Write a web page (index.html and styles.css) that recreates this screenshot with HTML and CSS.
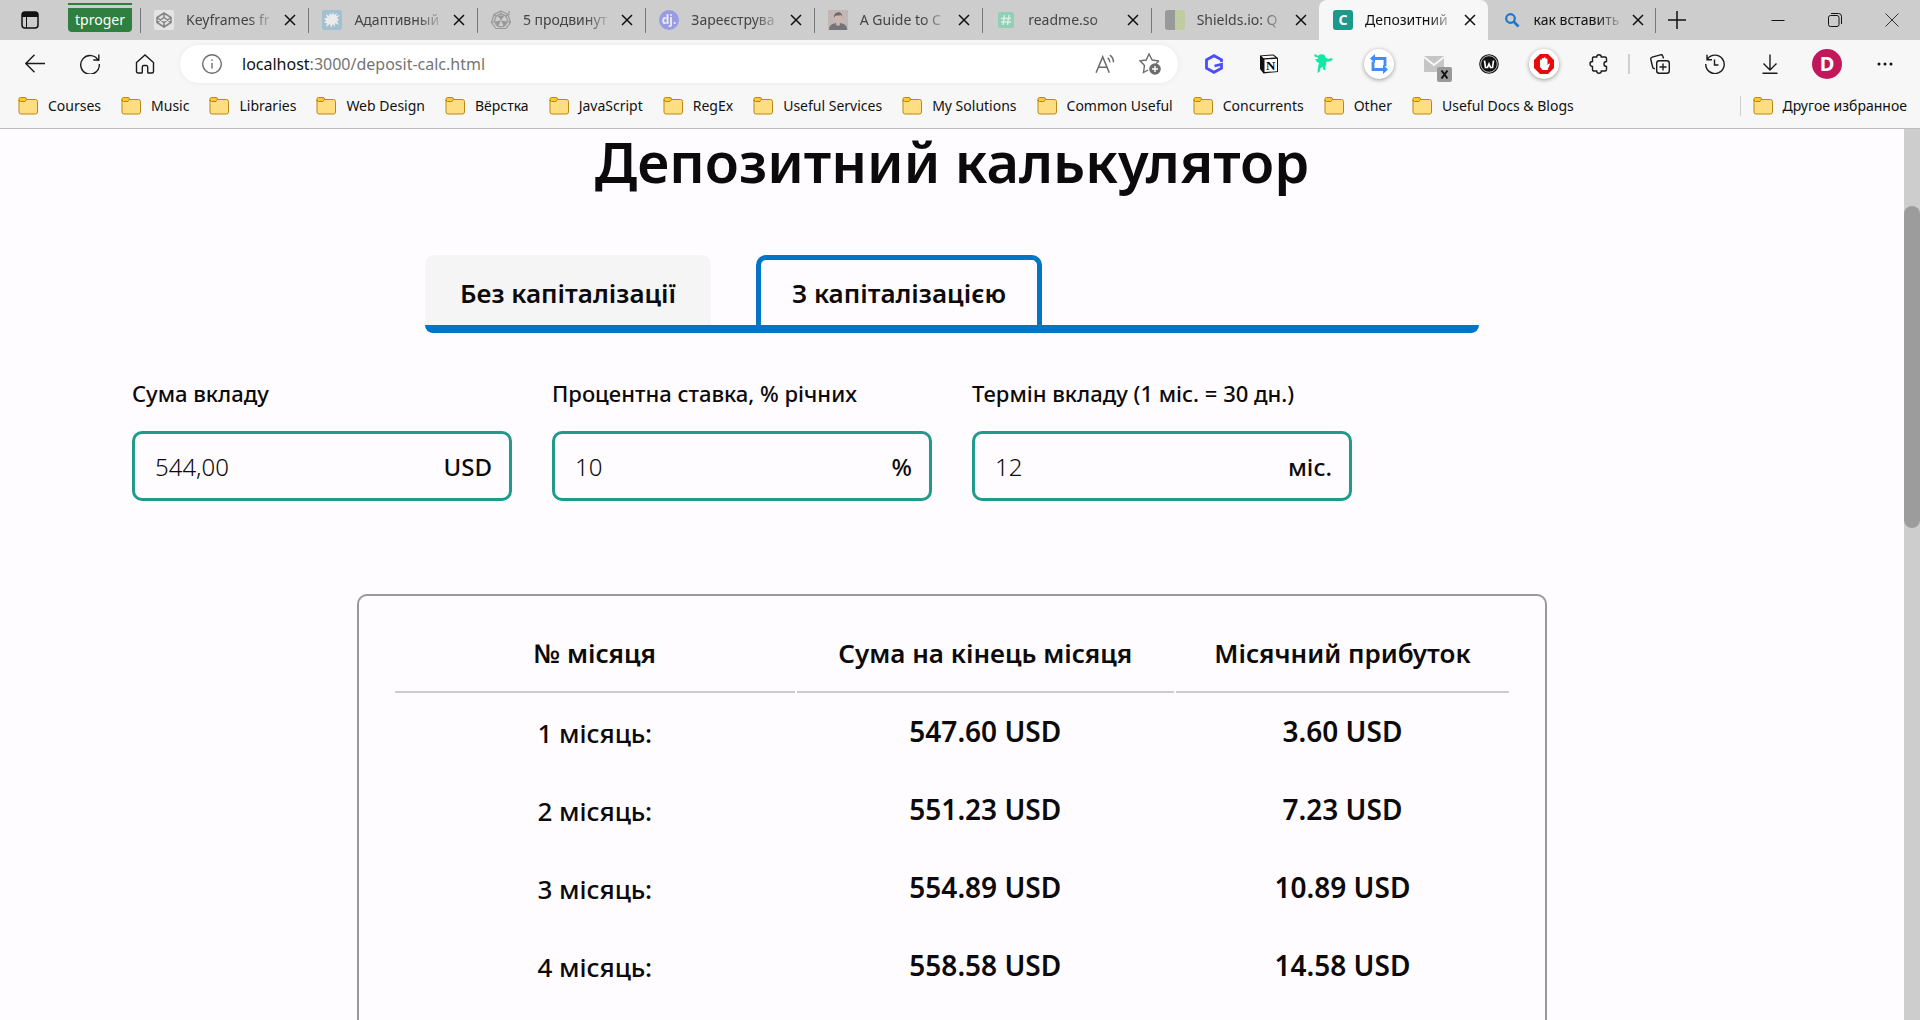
FILE: index.html
```html
<!DOCTYPE html>
<html lang="uk">
<head>
<meta charset="utf-8">
<meta name="viewport" content="width=device-width, initial-scale=1">
<title>Депозитний калькулятор</title>
<link rel="stylesheet" href="styles.css">
</head>
<body>
<svg class="defs" width="0" height="0" aria-hidden="true">
  <symbol id="x" viewBox="0 0 12 12"><path d="M1 1l10 10M11 1L1 11" fill="none" stroke="currentColor" stroke-width="1.5"/></symbol>
  <symbol id="folder" viewBox="0 0 20 20"><path d="M1 4.500V16a2 2 0 0 0 2 2h14.500a2 2 0 0 0 2-2V5.500a2 2 0 0 0-2-2H8" fill="#ffde82" stroke="#b98a10"/><path d="M1 5V3a1.500 1.500 0 0 1 1.500-1.500h4.500a1.500 1.500 0 0 1 1.500 1.500v.5L7 5.500H2.500A1.500 1.500 0 0 1 1 4z" fill="#ffc92e" stroke="#b98a10"/></symbol>
</svg>

<header class="browser">
  <div class="tabstrip">
    <button class="strip-menu" type="button" aria-label="Вкладки"><svg width="18" height="18" viewBox="0 0 18 18"><rect x="1" y="1" width="16" height="16" rx="3" fill="none" stroke="#111" stroke-width="1.500"/><path d="M1 6V4a3 3 0 0 1 3-3h10a3 3 0 0 1 3 3v2z" fill="#111"/><path d="M5.500 6v11" stroke="#111"/></svg></button>
    <div class="group"><button class="group-chip" type="button">tproger</button></div>
    <div class="tabs">
      <div class="tab dim"><svg class="fav" viewBox="0 0 20 20"><rect width="20" height="20" rx="2" fill="#f4f4f4"/><path d="M10 3l7 4.500v5L10 17l-7-4.500v-5zM10 3v4.500M10 12.500V17M3 7.500l7 5 7-5M3 12.500l7-5 7 5" fill="none" stroke="#555" stroke-width="1.500"/></svg><span class="tab-title">Keyframes fr</span><button class="close" type="button" aria-label="Закрити"><svg><use href="#x"/></svg></button></div>
      <div class="tab dim"><svg class="fav" viewBox="0 0 20 20"><rect width="20" height="20" rx="2" fill="#86bad2"/><path d="M10 5l1-3 1 3 3-2-1 3 4-1-3 3 2 2-2 1 2 4-4-2 0 4-2-3-2 4-1-4-4 3 1-4-3 0 2-2-2-3 3 0-1-4 3 2 1-3z" fill="#fff"/></svg><span class="tab-title">Адаптивный</span><button class="close" type="button" aria-label="Закрити"><svg><use href="#x"/></svg></button></div>
      <div class="tab dim"><svg class="fav" viewBox="0 0 20 20"><g fill="none" stroke="#777" stroke-width="1.200"><path d="M10 1l7 3.500 2.500 8L15 18.500H5L.5 12.500 3 4.500z"/><circle cx="10" cy="10.500" r="6.300"/><path d="M10 1v3M3 4.500l2.500 2M17 4.500l-2.500 2M.5 12.500l3-1M19.500 12.500l-3-1M18 1v4"/></g><path d="M10 10.500L6.500 5.500h7zM10 10.500l6 1-3 5zM10 10.500l-6 1 3 5z" fill="#777"/></svg><span class="tab-title">5 продвинут</span><button class="close" type="button" aria-label="Закрити"><svg><use href="#x"/></svg></button></div>
      <div class="tab dim"><svg class="fav" viewBox="0 0 20 20"><circle cx="10" cy="10" r="10" fill="#747cf5"/><text x="10" y="14" text-anchor="middle" class="fav-text">dj.</text></svg><span class="tab-title">Зареєструва</span><button class="close" type="button" aria-label="Закрити"><svg><use href="#x"/></svg></button></div>
      <div class="tab dim"><svg class="fav" viewBox="0 0 20 20"><rect width="20" height="20" fill="#b9aaa8"/><path d="M1 20c0-5 3-7 9-7s9 2 9 7z" fill="#3b3b42"/><path d="M8 11h4v4l-2 1-2-1z" fill="#c79d90"/><ellipse cx="10" cy="8" rx="3.500" ry="5" fill="#d3a99b"/><path d="M6 8c-1-7 9-8 8-1l-1-2c-2 1-4 0-6 1z" fill="#2c2728"/></svg><span class="tab-title">A Guide to C</span><button class="close" type="button" aria-label="Закрити"><svg><use href="#x"/></svg></button></div>
      <div class="tab dim"><svg class="fav" viewBox="0 0 20 20"><rect x="2" y="2" width="16" height="16" rx="2" fill="#66d3a8"/><path d="M8.500 5l-1.500 10M13 5l-1.500 10M5 8.500h10M5 12h10" stroke="#e8fff4" stroke-width="1.500"/></svg><span class="tab-title">readme.so</span><button class="close" type="button" aria-label="Закрити"><svg><use href="#x"/></svg></button></div>
      <div class="tab dim"><svg class="fav" viewBox="0 0 20 20"><path d="M3 0h7v20H3a3 3 0 0 1-3-3V3a3 3 0 0 1 3-3z" fill="#777"/><path d="M10 0h7a3 3 0 0 1 3 3v14a3 3 0 0 1-3 3h-7z" fill="#b6cc83"/></svg><span class="tab-title">Shields.io: Q</span><button class="close" type="button" aria-label="Закрити"><svg><use href="#x"/></svg></button></div>
      <div class="tab active"><svg class="fav" viewBox="0 0 20 20"><rect width="20" height="20" rx="3" fill="#1d998b"/><text x="10" y="15" text-anchor="middle" class="fav-text big">C</text></svg><span class="tab-title">Депозитний</span><button class="close" type="button" aria-label="Закрити"><svg><use href="#x"/></svg></button></div>
      <div class="tab last"><svg class="fav" viewBox="0 0 20 20"><circle cx="8.500" cy="8.500" r="4.300" fill="none" stroke="#1878d2" stroke-width="2.200"/><path d="M11.500 11.500l5 5" stroke="#1878d2" stroke-width="2.600"/></svg><span class="tab-title">как вставить</span><button class="close" type="button" aria-label="Закрити"><svg><use href="#x"/></svg></button></div>
    </div>
    <button class="new-tab" type="button" aria-label="Нова вкладка"><svg width="18" height="18" viewBox="0 0 18 18"><path d="M9 0v18M0 9h18" stroke="#111" stroke-width="1.500"/></svg></button>
    <div class="window-controls">
      <button type="button" aria-label="Згорнути"><svg width="14" height="14" viewBox="0 0 14 14"><path d="M.5 7.500h13" stroke="#111"/></svg></button>
      <button type="button" aria-label="Розгорнути"><svg width="14" height="14" viewBox="0 0 14 14" fill="none" stroke="#111"><rect x=".5" y="2.500" width="10.500" height="11" rx="2"/><path d="M3 .5h7.500a3 3 0 0 1 3 3V11"/></svg></button>
      <button type="button" aria-label="Закрити вікно"><svg width="14" height="14" viewBox="0 0 14 14"><path d="M.5.5l13 13M13.500.5l-13 13" stroke="#333"/></svg></button>
    </div>
  </div>

  <div class="toolbar">
    <button class="tool" type="button" aria-label="Назад"><svg class="ico" viewBox="0 0 20 20"><path d="M20 9.500H.8M9.500.8L.8 9.500l8.700 8.700"/></svg></button>
    <button class="tool" type="button" aria-label="Оновити"><svg class="ico" viewBox="0 0 20 20"><path d="M18.500 7A9.300 9.300 0 1 0 19.300 10M18.800.5v5.500h-5.500"/></svg></button>
    <button class="tool" type="button" aria-label="Додому"><svg class="ico" viewBox="0 0 20 20"><path d="M1.500 8.500L10 1l8.500 7.500v9a1.500 1.500 0 0 1-1.500 1.500h-3.500a.8.8 0 0 1-.8-.8V13a1.500 1.500 0 0 0-1.500-1.500H8.800A1.500 1.500 0 0 0 7.300 13v5.200a.8.8 0 0 1-.8.8H3a1.500 1.500 0 0 1-1.500-1.500z"/></svg></button>
    <div class="address">
      <svg class="ico soft" viewBox="0 0 20 20"><circle cx="10" cy="10" r="9.300"/><path d="M10 9v5.500M10 5.200v1.600"/></svg>
      <span class="url"><span class="host">localhost</span>:3000/deposit-calc.html</span>
      <button type="button" aria-label="Читати вголос"><svg class="ico soft" viewBox="0 0 20 20"><path d="M1 18L7 3.500 13 18M3 13h8M11.500 4.500c1.500 1 2 2.300 2 4M13.500 2c2.300 1.500 3.300 3.500 3.300 6.500"/></svg></button>
      <button type="button" aria-label="Додати до обраного"><svg class="ico soft" viewBox="0 0 22 22"><path d="M20 8l-6.800-1L10 1 7.200 7 1 7.800 5.500 12.500 4.500 19.500 9 17M20 8l-3 2.500"/><circle cx="16" cy="16" r="5.800" fill="#6d6d6d" stroke="none"/><path d="M16 13v6M13 16h6" stroke="#fff"/></svg></button>
    </div>
    <div class="tools">
      <button class="tool" type="button" aria-label="Розширення G"><svg width="20" height="20" viewBox="0 0 20 20"><path d="M17.500 8V5.800L10 1.700 2.500 5.800v8.400l7.500 4.100 7.500-4.100v-4L10.500 12" fill="none" stroke="#4a4cff" stroke-width="2.800"/></svg></button>
      <button class="tool" type="button" aria-label="Notion"><svg width="20" height="20" viewBox="0 0 20 20"><path d="M1 1.500L14.500.5 19 4v14l-14.500 1.500L1 15z" fill="#111"/><path d="M5.500 5.500l12.500-.8v12.600l-12.500.8z" fill="#fff"/><path d="M2.500 2.300l11.500-.8 2.500 2-11.800.8z" fill="#fff"/><text x="11.800" y="16" text-anchor="middle" class="notion">N</text></svg></button>
      <button class="tool" type="button" aria-label="Розширення"><svg width="20" height="20" viewBox="0 0 20 20"><path d="M1 0l3 2c1-2 5-2 6.500-1L12 4l3 1 2-1 2 1-2 2-5 1 .5 2-1.500 3 .5 3h-2l-1-3-2 1-1 4-2 1 .500-6 1-4L3 8 1 5h3V4L0 2z" fill="#14e8a6"/></svg></button>
      <button class="tool" type="button" aria-label="Обмін"><span class="disc"><svg width="20" height="20" viewBox="0 0 20 20"><path d="M5 4.500h11v8M4 7.500v8h11" fill="none" stroke="#428bff" stroke-width="2.800"/><path d="M6 0v9L1 4.500zM14 11v9l5-4.500z" fill="#428bff"/></svg></span></button>
      <button class="tool" type="button" aria-label="Пошта"><svg class="mail" width="30" height="30" viewBox="0 0 30 30"><rect x="2" y="4" width="20" height="16" fill="#c6c6c6"/><path d="M2 5l10 8 10-8" fill="none" stroke="#f7f7f7" stroke-width="2"/><rect x="15" y="15" width="15" height="15" rx="2" fill="#999"/><path d="M19.500 18.500l6 8M25.500 18.500l-6 8" stroke="#111" stroke-width="2"/></svg></button>
      <button class="tool" type="button" aria-label="Розширення W"><svg width="20" height="20" viewBox="0 0 20 20"><circle cx="10" cy="10" r="9.800" fill="#111"/><circle cx="10" cy="10" r="8.300" fill="none" stroke="#eee" stroke-width=".8"/><path d="M5.500 6.500l1 7h2L10 10l1.500 3.500h2l1-7" fill="none" stroke="#fff" stroke-width="1.700"/></svg></button>
      <button class="tool" type="button" aria-label="Блокувальник"><span class="disc"><svg width="20" height="20" viewBox="0 0 20 20"><path d="M6 0h8l6 6v8l-6 6H6l-6-6V6z" fill="#e60c0c"/><path d="M6 11V6.500a.9.900 0 0 1 1.800 0V5a.9.900 0 0 1 1.900 0V4.200a.9.900 0 0 1 1.900 0V5.500a.9.900 0 0 1 1.900 0V11l1.300-1.300c.8-.5 1.400.1 1 .9L13.500 16h-5L6 13z" fill="#fff"/></svg></span></button>
      <button class="tool" type="button" aria-label="Розширення"><svg class="ico" viewBox="0 0 20 20"><path d="M4.500 3h3.200a2.300 2.300 0 0 1 4.600 0H16A1.500 1.500 0 0 1 17.500 4.500v3a2.400 2.400 0 1 0 0 5v3A1.500 1.500 0 0 1 16 17h-3.700a2.300 2.300 0 0 1-4.600 0H4.500A1.500 1.500 0 0 1 3.500 15.500v-3a2.400 2.400 0 0 1 0-5v-3A1.500 1.500 0 0 1 4.500 3z"/></svg></button>
      <span class="rule"></span>
      <button class="tool" type="button" aria-label="Колекції"><svg class="ico" viewBox="0 0 20 20"><path d="M5 14.500c-1 .3-2-.3-2.300-1.300L.8 5.500C.5 4.300 1 3.500 2.200 3.100L10.500.8c1-.3 2 .3 2.300 1.300l.7 2.400"/><rect x="6.700" y="6.700" width="12.600" height="12.600" rx="2.500"/><path d="M13 9.500v7M9.500 13h7"/></svg></button>
      <button class="tool" type="button" aria-label="Журнал"><svg class="ico" viewBox="0 0 20 20"><path d="M2.500 5A9.200 9.200 0 1 1 .8 10M2 .8v5h5M9.500 5.500v5.500h4"/></svg></button>
      <button class="tool" type="button" aria-label="Завантаження"><svg class="ico" viewBox="0 0 20 20"><path d="M10 .5V16M3.500 9.500L10 16l6.500-6.500M2.500 19.200h15"/></svg></button>
      <button class="tool profile" type="button" aria-label="Профіль"><span class="avatar">D</span></button>
      <button class="tool" type="button" aria-label="Меню"><svg width="20" height="20" viewBox="0 0 20 20" fill="#111"><circle cx="4" cy="10" r="1.500"/><circle cx="10" cy="10" r="1.500"/><circle cx="16" cy="10" r="1.500"/></svg></button>
    </div>
  </div>

  <nav class="bookmarks" aria-label="Обране">
    <a href="#"><svg><use href="#folder"/></svg>Courses</a>
    <a href="#"><svg><use href="#folder"/></svg>Music</a>
    <a href="#"><svg><use href="#folder"/></svg>Libraries</a>
    <a href="#"><svg><use href="#folder"/></svg>Web Design</a>
    <a href="#"><svg><use href="#folder"/></svg>Вёрстка</a>
    <a href="#"><svg><use href="#folder"/></svg>JavaScript</a>
    <a href="#"><svg><use href="#folder"/></svg>RegEx</a>
    <a href="#"><svg><use href="#folder"/></svg>Useful Services</a>
    <a href="#"><svg><use href="#folder"/></svg>My Solutions</a>
    <a href="#"><svg><use href="#folder"/></svg>Common Useful</a>
    <a href="#"><svg><use href="#folder"/></svg>Concurrents</a>
    <a href="#"><svg><use href="#folder"/></svg>Other</a>
    <a href="#"><svg><use href="#folder"/></svg>Useful Docs &amp; Blogs</a>
    <a class="others" href="#"><svg><use href="#folder"/></svg>Другое избранное</a>
  </nav>
</header>

<div class="viewport">
  <main class="page">
    <h1>Депозитний калькулятор</h1>
    <div class="modes">
      <button class="mode" type="button">Без капіталізації</button>
      <button class="mode current" type="button">З капіталізацією</button>
    </div>
    <form class="fields">
      <div class="field">
        <label for="sum">Сума вкладу</label>
        <div class="box"><input id="sum" type="text" value="544,00"><span>USD</span></div>
      </div>
      <div class="field">
        <label for="rate">Процентна ставка, % річних</label>
        <div class="box"><input id="rate" type="text" value="10"><span>%</span></div>
      </div>
      <div class="field">
        <label for="term">Термін вкладу (1 міс. = 30 дн.)</label>
        <div class="box"><input id="term" type="text" value="12"><span>міс.</span></div>
      </div>
    </form>
    <section class="result">
      <table>
        <thead><tr><th class="month">№ місяця</th><th class="total">Сума на кінець місяця</th><th>Місячний прибуток</th></tr></thead>
        <tbody>
          <tr><td>1 місяць:</td><td class="money">547.60 USD</td><td class="money">3.60 USD</td></tr>
          <tr><td>2 місяць:</td><td class="money">551.23 USD</td><td class="money">7.23 USD</td></tr>
          <tr><td>3 місяць:</td><td class="money">554.89 USD</td><td class="money">10.89 USD</td></tr>
          <tr><td>4 місяць:</td><td class="money">558.58 USD</td><td class="money">14.58 USD</td></tr>
        </tbody>
      </table>
    </section>
  </main>
  <div class="scrollbar"><div class="thumb"></div></div>
</div>
</body>
</html>
```
FILE: styles.css
```css
* { box-sizing: border-box; }

body {
  margin: 0;
  height: 100vh;
  display: flex;
  flex-direction: column;
  overflow: hidden;
  background: #fefcff;
  color: #0d0a0b;
  font-family: "Noto Sans", "Open Sans", sans-serif;
}

button {
  margin: 0;
  padding: 0;
  border: 0;
  background: none;
  color: inherit;
  font: inherit;
}

.defs { display: none; }

/* Browser frame */
.browser {
  flex: none;
  background: #f7f7f7;
  border-bottom: 1px solid #bdbdbd;
  color: #111;
  font-size: 14px;
  line-height: 20px;
}

.tabstrip {
  display: flex;
  height: 40px;
  background: #cdcdcd;
}

.strip-menu {
  flex: none;
  width: 60px;
  display: grid;
  place-items: center;
}

.group {
  flex: none;
  width: 80px;
  padding: 3px 8px 8px;
}

.group-chip {
  width: 64px;
  height: 29px;
  padding-top: 3px;
  border-top: 2px solid #2f8040;
  border-radius: 0 0 4px 4px;
  background: linear-gradient(#cdcdcd 3px, #2f8040 3px);
  color: #fff;
}

.tabs {
  flex: 0 1 1516px;
  min-width: 0;
  display: flex;
}

.tab {
  flex: 1 1 0;
  min-width: 0;
  display: flex;
  align-items: center;
  padding: 0 4px 0 14px;
  background: linear-gradient(#777, #777) 0 8px / 1px 25px no-repeat;
}

.tab.active {
  border-radius: 8px 8px 0 0;
  background: #f7f7f7;
}

.tab.last {
  background: linear-gradient(#777, #777) 100% 8px / 1px 25px no-repeat;
}

.fav {
  flex: none;
  width: 20px;
  height: 20px;
}

.dim .fav { opacity: .6; }

.fav-text {
  fill: #fff;
  font-size: 12px;
  font-weight: 700;
}

.fav-text.big { font-size: 14px; }

.notion {
  font: 700 13px "Liberation Serif", serif;
}

.tab-title {
  flex: 1;
  margin-left: 12px;
  overflow: hidden;
  white-space: nowrap;
  mask-image: linear-gradient(90deg, #000 70%, transparent);
}

.dim .tab-title { color: #444; }

.close {
  flex: none;
  width: 28px;
  height: 28px;
  display: grid;
  place-items: center;
}

.close svg {
  width: 12px;
  height: 12px;
}

.new-tab {
  flex: none;
  width: 42px;
  display: grid;
  place-items: center;
}

.window-controls {
  flex: none;
  display: flex;
  margin-left: auto;
}

.window-controls button {
  width: 57px;
  display: grid;
  place-items: center;
}

.toolbar {
  display: flex;
  align-items: center;
  height: 48px;
  padding: 0 8px 0 7px;
}

.tool {
  flex: none;
  width: 55px;
  height: 40px;
  display: grid;
  place-items: center;
}

.tool.profile { width: 60px; }

.ico {
  width: 20px;
  height: 20px;
  fill: none;
  stroke: #1b1b1b;
  stroke-width: 1.4;
}

.ico.soft { stroke: #6d6d6d; }

.address {
  flex: 1;
  display: flex;
  align-items: center;
  gap: 20px;
  height: 38px;
  margin-left: 8px;
  padding: 0 16px 0 22px;
  border-radius: 19px;
  background: #fff;
  box-shadow: 0 0 6px #eaeaea;
  font-size: 16px;
}

.address button {
  display: grid;
  place-items: center;
  width: 24px;
  height: 24px;
}

.address button .ico {
  width: 22px;
  height: 22px;
}

.url {
  flex: 1;
  color: #757575;
}

.host { color: #111; }

.tools {
  display: flex;
  align-items: center;
  margin-left: 8px;
}

.rule {
  width: 2px;
  height: 20px;
  margin: 0 2px;
  background: #cfcfcf;
}

.disc {
  width: 30px;
  height: 30px;
  display: grid;
  place-items: center;
  border-radius: 50%;
  background: #fff;
  box-shadow: 0 1px 4px #999;
}

.mail {
  margin: 6px 0 0 6px;
}

.avatar {
  width: 30px;
  height: 30px;
  border-radius: 50%;
  background: #c2185b;
  color: #fff;
  font-size: 20px;
  font-weight: 700;
  line-height: 30px;
}

.bookmarks {
  display: flex;
  align-items: center;
  gap: 20px;
  height: 40px;
  padding: 0 13px 4px 18px;
}

.bookmarks a {
  display: flex;
  align-items: center;
  gap: 10px;
  color: inherit;
  text-decoration: none;
  white-space: nowrap;
}

.bookmarks svg {
  width: 20px;
  height: 20px;
}

.bookmarks .others {
  margin-left: auto;
  padding-left: 12px;
  border-left: 1px solid #cfcfcf;
}

/* Page */
.viewport {
  flex: 1;
  min-height: 0;
  display: flex;
  overflow: hidden;
}

.page {
  flex: 1;
  padding: 0 132px;
}

.scrollbar {
  width: 16px;
  padding-top: 77px;
  background: #cdcdcd;
}

.thumb {
  height: 322px;
  border-radius: 8px;
  background: #9c9c9c;
}

h1 {
  margin: 0 0 62px;
  font-size: 56px;
  font-weight: 600;
  line-height: 64px;
  text-align: center;
}

.modes {
  display: flex;
  gap: 45px;
  max-width: 1054px;
  margin: 0 auto;
  border-bottom: 8px solid #0074c6;
  border-radius: 0 0 8px 8px;
}

.mode {
  width: 286px;
  height: 70px;
  border: 5px solid #f5f5f5;
  border-bottom: 0;
  border-radius: 10px 10px 0 0;
  background: #f5f5f5;
  font-size: 26px;
  font-weight: 600;
  white-space: nowrap;
}

.mode.current {
  border-color: #0074c6;
  background: none;
}

.fields {
  display: flex;
  gap: 40px;
  margin-top: 44px;
}

.field {
  flex: 0 1 380px;
  min-width: 0;
  display: flex;
  flex-direction: column;
  gap: 22px;
}

label {
  font-size: 22px;
  font-weight: 500;
  line-height: 32px;
  white-space: nowrap;
}

.box {
  display: flex;
  align-items: center;
  height: 70px;
  padding: 0 17px 0 20px;
  border: 3px solid #1f9a8b;
  border-radius: 10px;
  font-size: 24px;
  font-weight: 500;
}

.box input {
  flex: 1;
  min-width: 0;
  padding: 0;
  border: 0;
  outline: 0;
  background: none;
  color: inherit;
  font: 300 24px "Noto Sans", sans-serif;
}

.result {
  max-width: 1190px;
  margin: 93px auto 0;
  padding: 34px;
  border: 2px solid #999;
  border-radius: 10px;
}

table {
  width: 100%;
  border-spacing: 2px;
  font-size: 26px;
  font-weight: 500;
  text-align: center;
}

th {
  height: 61px;
  padding: 0 0 18px;
  border-bottom: 2px solid #ccc;
  font-weight: 600;
  white-space: nowrap;
}

.month { width: 36%; }

.total { width: 34%; }

td {
  height: 76px;
  padding: 0;
}

.money {
  padding-bottom: 4px;
  font-size: 28px;
  font-weight: 600;
}
```
